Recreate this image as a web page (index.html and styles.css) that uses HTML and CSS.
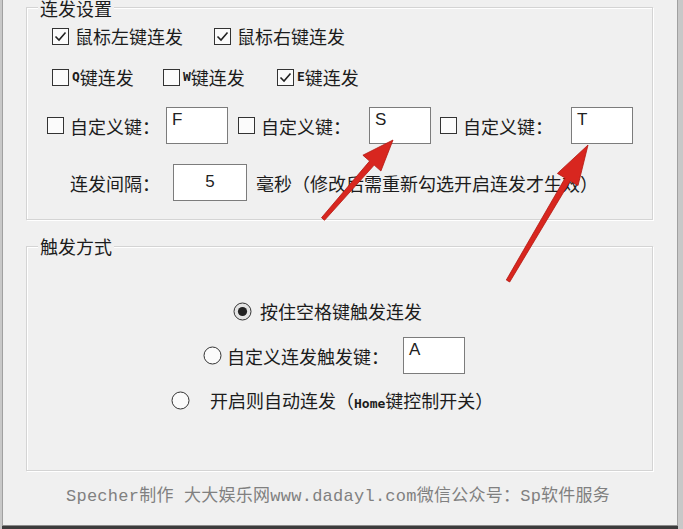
FILE: index.html
```html
<!DOCTYPE html>
<html lang="zh-CN">
<head>
    <meta charset="UTF-8">
    <title>连发设置</title>
    <link rel="stylesheet" href="styles.css">
</head>
<body>
    <div class="window">
        <!-- 连发设置 -->
        <div class="group group-fire">
            <div class="group-title">连发设置</div>

            <div class="row row-mouse">
                <label class="opt">
                    <svg class="cb" viewBox="0 0 17 17"><rect x="0.5" y="0.5" width="16" height="16" fill="#fbfbfb" stroke="#333"/><path d="M3.5 8.5l3.5 3.5 6.5-7.5" fill="none" stroke="#222" stroke-width="1.6"/></svg>
                    鼠标左键连发
                </label>
                <label class="opt">
                    <svg class="cb" viewBox="0 0 17 17"><rect x="0.5" y="0.5" width="16" height="16" fill="#fbfbfb" stroke="#333"/><path d="M3.5 8.5l3.5 3.5 6.5-7.5" fill="none" stroke="#222" stroke-width="1.6"/></svg>
                    鼠标右键连发
                </label>
            </div>

            <div class="row row-keys">
                <label class="opt opt-tight">
                    <svg class="cb" viewBox="0 0 17 17"><rect x="0.5" y="0.5" width="16" height="16" fill="#fbfbfb" stroke="#333"/></svg>
                    <span class="latin">Q</span>键连发
                </label>
                <label class="opt opt-tight">
                    <svg class="cb" viewBox="0 0 17 17"><rect x="0.5" y="0.5" width="16" height="16" fill="#fbfbfb" stroke="#333"/></svg>
                    <span class="latin">W</span>键连发
                </label>
                <label class="opt opt-tight">
                    <svg class="cb" viewBox="0 0 17 17"><rect x="0.5" y="0.5" width="16" height="16" fill="#fbfbfb" stroke="#333"/><path d="M3.5 8.5l3.5 3.5 6.5-7.5" fill="none" stroke="#222" stroke-width="1.6"/></svg>
                    <span class="latin">E</span>键连发
                </label>
            </div>

            <div class="row row-custom">
                <div class="opt">
                    <svg class="cb" viewBox="0 0 17 17"><rect x="0.5" y="0.5" width="16" height="16" fill="#fbfbfb" stroke="#333"/></svg>
                    <span class="key-label key-label-first">自定义键：</span>
                    <span class="keybox">F</span>
                </div>
                <div class="opt">
                    <svg class="cb" viewBox="0 0 17 17"><rect x="0.5" y="0.5" width="16" height="16" fill="#fbfbfb" stroke="#333"/></svg>
                    <span class="key-label">自定义键：</span>
                    <span class="keybox">S</span>
                </div>
                <div class="opt">
                    <svg class="cb" viewBox="0 0 17 17"><rect x="0.5" y="0.5" width="16" height="16" fill="#fbfbfb" stroke="#333"/></svg>
                    <span class="key-label">自定义键：</span>
                    <span class="keybox">T</span>
                </div>
            </div>

            <div class="row row-interval">
                <span class="interval-label">连发间隔：</span>
                <span class="keybox keybox-num">5</span>
                <span class="note">毫秒（修改后需重新勾选开启连发才生效）</span>
            </div>
        </div>

        <!-- 触发方式 -->
        <div class="group group-trigger">
            <div class="group-title">触发方式</div>

            <div class="radio-row radio-space">
                <svg class="radio" viewBox="0 0 19 19"><circle cx="9.5" cy="9.5" r="8.5" fill="#e4e4e4" stroke="#333"/><circle cx="9.5" cy="9.5" r="4.6" fill="#222"/></svg>
                <span class="radio-label">按住空格键触发连发</span>
            </div>
            <div class="radio-row radio-custom">
                <svg class="radio" viewBox="0 0 19 19"><circle cx="9.5" cy="9.5" r="8.5" fill="#fbfbfb" stroke="#333"/></svg>
                <span class="radio-label trigger-label">自定义连发触发键：</span>
                <span class="keybox">A</span>
            </div>
            <div class="radio-row radio-auto">
                <svg class="radio" viewBox="0 0 19 19"><circle cx="9.5" cy="9.5" r="8.5" fill="#fbfbfb" stroke="#333"/></svg>
                <span class="radio-label">开启则自动连发（<span class="latin">Home</span>键控制开关）</span>
            </div>
        </div>

        <div class="footer">Specher制作 大大娱乐网www.dadayl.com微信公众号：Sp软件服务</div>
    </div>

    <!-- red arrows drawn over the dialog -->
    <svg class="arrows" width="683" height="529" viewBox="0 0 683 529">
        <polygon points="321.5,217.7 369.6,161.1 362.9,155.2 393,140 380.9,171 374.2,165.1 324.5,220.3" fill="#d8261f" stroke="#b3160f" stroke-width="0.8"/>
        <polygon points="506.3,280 565.1,178 557.4,173.4 588,145 578,185.6 570.3,181 509.7,282" fill="#d8261f" stroke="#b3160f" stroke-width="0.8"/>
    </svg>
</body>
</html>
```

FILE: styles.css
```css
body {
    margin: 0;
    width: 683px;
    height: 529px;
    position: relative;
    overflow: hidden;
    background-color: #c8c8c8;
    font-family: "Noto Sans CJK SC", sans-serif;
    font-size: 18px;
    color: #1c1c1c;
}

.window {
    margin-left: 2px;
    width: 676px;
    height: 526px;
    box-sizing: border-box;
    background-color: #f0f0f0;
    border-left: 1px solid #a0a0a0;
    border-right: 1px solid #a0a0a0;
    border-bottom: 1px solid #8a8a8a;
    box-shadow: 0 3px 0 #3c3c3c;
    display: flex;
    flex-direction: column;
}

/* group boxes */
.group {
    margin-left: 23px;
    width: 627px;
    box-sizing: border-box;
    border: 1px solid #d4d4d4;
    box-shadow: inset 1px 1px 0 #fff, 1px 1px 0 #fff;
    display: flex;
    flex-direction: column;
}

.group-fire {
    margin-top: 7px;
    height: 213px;
}

.group-trigger {
    margin-top: 26px;
    height: 225px;
}

.group-title {
    align-self: flex-start;
    margin: -9px 0 0 11px;
    padding: 0 2px;
    height: 18px;
    line-height: 18px;
    background-color: #f0f0f0;
}

.group-trigger .group-title {
    margin-top: -10px;
}

/* rows */
.row {
    display: grid;
    align-items: center;
}

.row-mouse {
    margin-top: 6px;
    height: 26px;
    padding-left: 25px;
    grid-template-columns: 162px auto;
}

.row-keys {
    margin-top: 15px;
    height: 26px;
    padding-left: 25px;
    grid-template-columns: 111px 114px auto;
}

.row-custom {
    margin-top: 17px;
    height: 37px;
    padding-left: 20px;
    grid-template-columns: 191px 202px auto;
}

.row-interval {
    margin-top: 20px;
    height: 37px;
    padding-left: 43px;
    display: flex;
    align-items: center;
}

.opt {
    display: flex;
    align-items: center;
    white-space: nowrap;
    line-height: 20px;
}

.cb {
    width: 17px;
    height: 17px;
    flex: none;
    margin-right: 6px;
}

.opt-tight .cb {
    margin-right: 3px;
}

.latin {
    font-family: "DejaVu Sans Mono", monospace;
    font-weight: bold;
    font-size: 13px;
}

.key-label {
    width: 108px;
}

.key-label-first {
    width: 96px;
}

.keybox {
    width: 62px;
    height: 37px;
    box-sizing: border-box;
    flex: none;
    background-color: #fff;
    border: 1px solid #7c7c7c;
    padding: 2px 5px;
    font-family: "Liberation Sans", sans-serif;
    font-size: 17px;
    line-height: 20px;
    color: #222;
}

.keybox-num {
    width: 74px;
    text-align: center;
    line-height: 33px;
    padding: 0;
}

.interval-label {
    width: 103px;
}

.note {
    margin-left: 9px;
    white-space: nowrap;
}

/* radio rows */
.radio-row {
    display: flex;
    align-items: center;
    white-space: nowrap;
}

.radio {
    width: 19px;
    height: 19px;
    flex: none;
}

.radio-space {
    margin: 44px 0 0 206px;
    height: 24px;
}

.radio-space .radio-label {
    margin-left: 8px;
}

.radio-custom {
    margin: 14px 0 0 176px;
    height: 37px;
}

.trigger-label {
    margin-left: 5px;
    width: 176px;
}

.radio-auto {
    margin: 14px 0 0 144px;
    height: 24px;
}

.radio-auto .radio-label {
    margin-left: 20px;
}

.footer {
    margin-top: 16px;
    padding-left: 63px;
    height: 20px;
    line-height: 20px;
    font-family: "Liberation Mono", "Noto Sans CJK SC", monospace;
    font-size: 17px;
    letter-spacing: 0.25px;
    color: #808080;
    white-space: nowrap;
}

.arrows {
    position: absolute;
    left: 0;
    top: 0;
    pointer-events: none;
}
```
